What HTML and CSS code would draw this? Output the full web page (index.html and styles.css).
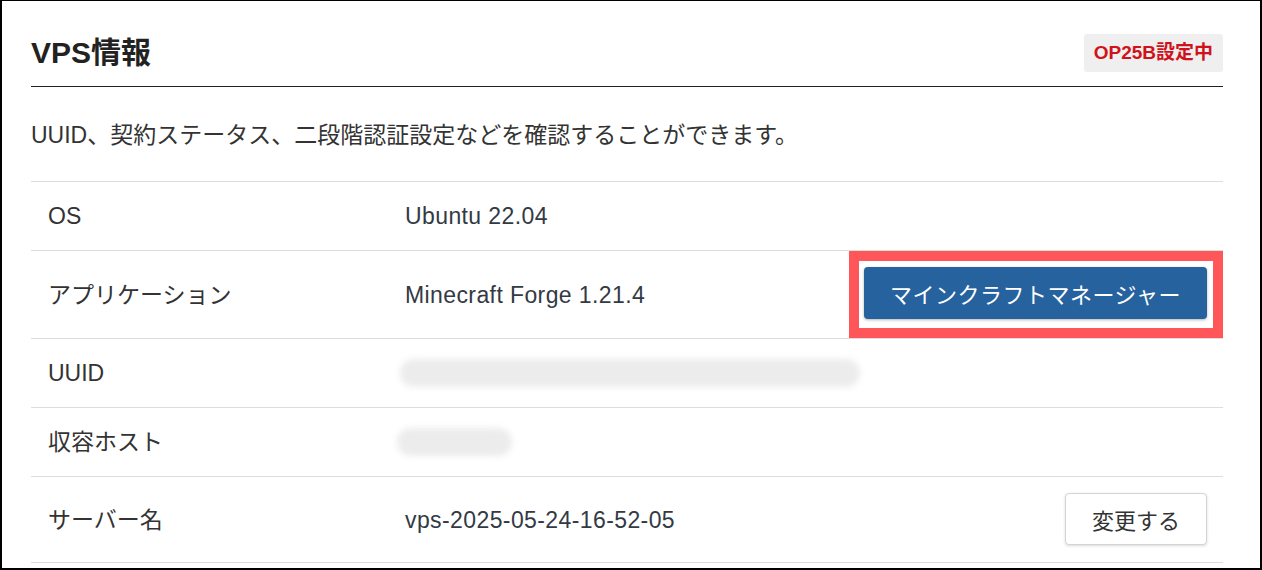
FILE: index.html
```html
<!DOCTYPE html>
<html lang="ja">
<head>
    <meta charset="UTF-8">
    <meta name="viewport" content="width=device-width, initial-scale=1.0">
    <title>VPS情報</title>
    <link rel="stylesheet" href="styles.css">
</head>
<body>
  <div id="vps-info">
    <div class="section-header">
      <h2 class="section-title">VPS情報</h2>
      <span class="badge">OP25B設定中</span>
    </div>

    <p class="section-desc">UUID、契約ステータス、二段階認証設定などを確認することができます。</p>

    <div class="info-table">
      <div class="info-row">
        <div class="info-label">OS</div>
        <div class="info-value">Ubuntu 22.04</div>
        <div class="info-action"></div>
      </div>
      <div class="info-row">
        <div class="info-label">アプリケーション</div>
        <div class="info-value">Minecraft Forge 1.21.4</div>
        <div class="info-action">
          <div class="highlight">
            <button class="btn-primary">マインクラフトマネージャー</button>
          </div>
        </div>
      </div>
      <div class="info-row">
        <div class="info-label">UUID</div>
        <div class="info-value"><span class="masked masked-uuid"></span></div>
        <div class="info-action"></div>
      </div>
      <div class="info-row">
        <div class="info-label">収容ホスト</div>
        <div class="info-value"><span class="masked masked-host"></span></div>
        <div class="info-action"></div>
      </div>
      <div class="info-row">
        <div class="info-label">サーバー名</div>
        <div class="info-value">vps-2025-05-24-16-52-05</div>
        <div class="info-action with-pad">
          <button class="btn-default">変更する</button>
        </div>
      </div>
    </div>
  </div>
</body>
</html>
```

FILE: styles.css
```css
html, body {
  height: 100%;
}

body {
  margin: 0;
  box-sizing: border-box;
  border: 2px solid #000;
  border-top-width: 1px;
  padding: 0 37px 0 29px;
  overflow: hidden;
  background-color: #fff;
  color: #333;
  font-family: "Liberation Sans", "Noto Sans CJK JP", sans-serif;
}

.section-header {
  display: flex;
  justify-content: space-between;
  align-items: center;
  padding: 33px 0 14px;
  border-bottom: 1px solid #222;
}

.section-title {
  margin: 0;
  font-size: 30px;
  line-height: 38px;
  font-weight: bold;
  color: #222;
}

.badge {
  display: inline-block;
  height: 38px;
  line-height: 38px;
  padding: 0 10px;
  border-radius: 3px;
  background-color: #efefef;
  color: #d0121b; /* red warning text */
  font-size: 19px;
  font-weight: bold;
}

.section-desc {
  margin: 0;
  padding: 32px 0 30px;
  font-size: 23px;
  line-height: 32px;
  color: #333;
}

.info-table {
  border-top: 1px solid #ddd;
}

.info-row {
  display: grid;
  grid-template-columns: 357px 1fr auto;
  align-items: center;
  border-bottom: 1px solid #ddd;
}

.info-label,
.info-value {
  padding: 20px 0 20px 17px;
  line-height: 28px;
}

.info-label {
  font-size: 23px;
  color: #333;
}

.info-value {
  font-size: 23px;
  letter-spacing: 0.4px;
  color: #333a44;
}

.info-action.with-pad {
  padding: 16px 16px 17px 0;
}

.highlight {
  border: 10px solid #fe5659;
  padding: 6px 6px 9px 5px;
}

.btn-primary {
  display: block;
  height: 52px;
  padding: 0 26px;
  border: none;
  border-radius: 4px;
  background-color: #25629e;
  color: #fff;
  font-family: inherit;
  font-size: 22px;
  letter-spacing: 0.5px;
  box-shadow: 0 1px 3px rgba(0, 0, 0, 0.3);
  cursor: pointer;
}

.btn-default {
  display: block;
  height: 52px;
  padding: 0 26px;
  border: 1px solid #d4d4d4;
  border-radius: 4px;
  background-color: #fff;
  color: #333;
  font-family: inherit;
  font-size: 22px;
  box-shadow: 0 1px 3px rgba(0, 0, 0, 0.15);
  cursor: pointer;
}

/* blurred-out private values */
.masked {
  display: block;
  height: 28px;
  border-radius: 14px;
  background-color: #ececec;
  filter: blur(3px);
}

.masked-uuid {
  width: 460px;
  margin-left: -5px;
}

.masked-host {
  width: 115px;
  margin-left: -8px;
}
```
